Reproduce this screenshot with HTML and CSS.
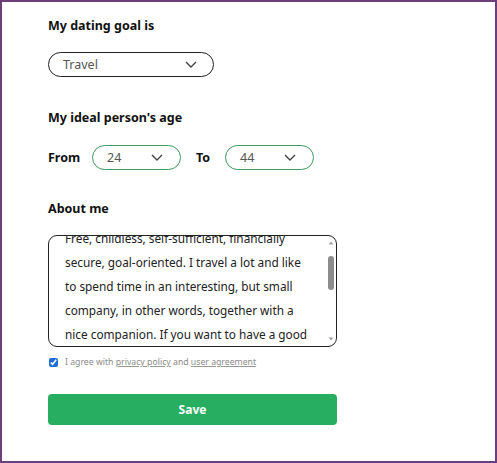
FILE: index.html
```html
<!DOCTYPE html>
<html>
<head>
<meta charset="utf-8">
<link rel="stylesheet" href="styles.css">
</head>
<body>
<div class="frame">
  <form class="form">
    <div class="label goal-label">My dating goal is</div>
    <div class="select goal-select">
      <span>Travel</span>
      <svg class="chev" width="12" height="7" viewBox="0 0 12 7"><path d="M1 1l5 5 5-5" fill="none" stroke="#444" stroke-width="1.4"/></svg>
    </div>
    <div class="label age-label">My ideal person's age</div>
    <div class="age-row">
      <span class="age-word">From</span>
      <div class="select age-select">
        <span>24</span>
        <svg class="chev" width="12" height="7" viewBox="0 0 12 7"><path d="M1 1l5 5 5-5" fill="none" stroke="#444" stroke-width="1.4"/></svg>
      </div>
      <span class="age-word to">To</span>
      <div class="select age-select">
        <span>44</span>
        <svg class="chev" width="12" height="7" viewBox="0 0 12 7"><path d="M1 1l5 5 5-5" fill="none" stroke="#444" stroke-width="1.4"/></svg>
      </div>
    </div>
    <div class="label about-label">About me</div>
    <div class="about">
      <div class="about-text">
        <p><span class="ln">Free, childless, self-sufficient, financially</span>
<span class="ln">secure, goal-oriented. I travel a lot and like</span>
<span class="ln">to spend time in an interesting, but small</span>
<span class="ln">company, in other words, together with a</span>
<span class="ln">nice companion. If you want to have a good</span></p>
      </div>
      <svg class="scrollbar" width="10" height="110" viewBox="0 0 10 110">
        <path d="M2.5 8.5L5 5.5 7.5 8.5z" fill="#a3a3a3"/>
        <rect x="2" y="20" width="6" height="34" rx="3" fill="#8c8c8c"/>
        <path d="M2.5 101.5L5 104.5 7.5 101.5z" fill="#a3a3a3"/>
      </svg>
    </div>
    <div class="agree">
      <input type="checkbox" checked>
      <span class="agree-text">I agree with <span class="link">privacy policy</span> and <span class="link">user agreement</span></span>
    </div>
    <button type="button" class="save">Save</button>
  </form>
</div>
</body>
</html>
```
FILE: styles.css
```css
html, body {
  margin: 0;
  padding: 0;
  background: #fff;
}
.frame {
  box-sizing: border-box;
  width: 497px;
  height: 463px;
  border: 2px solid #6c3f7c;
  padding: 0 0 0 46px;
  font-family: "Noto Sans", "Open Sans", sans-serif;
  color: #111;
}
.form {
  display: flex;
  flex-direction: column;
  align-items: flex-start;
  width: 288px;
}
.label {
  font-weight: 700;
  font-size: 12.5px;
  line-height: 16px;
  color: #111;
}
.goal-label { margin-top: 16px; }
.select {
  box-sizing: border-box;
  display: flex;
  align-items: center;
  justify-content: space-between;
  border: 1px solid #222;
  border-radius: 13px;
  font-size: 12.5px;
  color: #555;
}
.goal-select {
  margin-top: 18px;
  width: 166px;
  height: 25px;
  padding: 0 16px 0 14px;
}
.age-label { margin-top: 33px; }
.age-row {
  margin-top: 19px;
  display: flex;
  align-items: center;
  height: 25px;
}
.age-word {
  font-weight: 700;
  font-size: 12.5px;
  color: #111;
  width: 44px;
}
.age-word.to { width: 29px; margin-left: 15px; }
.age-select {
  width: 89px;
  height: 25px;
  border-color: #3d9a5e;
  padding: 0 17px 0 14px;
}
.about-label { margin-top: 31px; }
.about {
  box-sizing: border-box;
  margin-top: 18px;
  width: 289px;
  height: 112px;
  border: 1px solid #222;
  border-radius: 9px;
  display: flex;
  overflow: hidden;
}
.about-text {
  flex: 1;
  overflow: hidden;
  padding: 0 6px 0 16px;
  font-size: 11.8px;
  line-height: 24px;
  color: #222;
}
.about-text p {
  margin: -10px 0 0 0;
}
.ln {
  display: block;
  white-space: nowrap;
}
.scrollbar {
  flex: none;
  display: block;
}
.agree {
  margin-top: 9px;
  display: flex;
  align-items: center;
  height: 12px;
}
.agree input {
  margin: 0 7px 0 1px;
  width: 9px;
  height: 9px;
  accent-color: #1f6fd6;
}
.agree-text {
  font-size: 8.7px;
  line-height: 12px;
  color: #8a8a8a;
  white-space: nowrap;
}
.link {
  text-decoration: underline;
  text-decoration-color: #999;
}
.save {
  margin-top: 26px;
  width: 289px;
  height: 31px;
  border: none;
  border-radius: 4px;
  background: #27ae60;
  color: #fff;
  font-family: "Noto Sans", "Open Sans", sans-serif;
  font-weight: 700;
  font-size: 12px;
  cursor: pointer;
}
```
